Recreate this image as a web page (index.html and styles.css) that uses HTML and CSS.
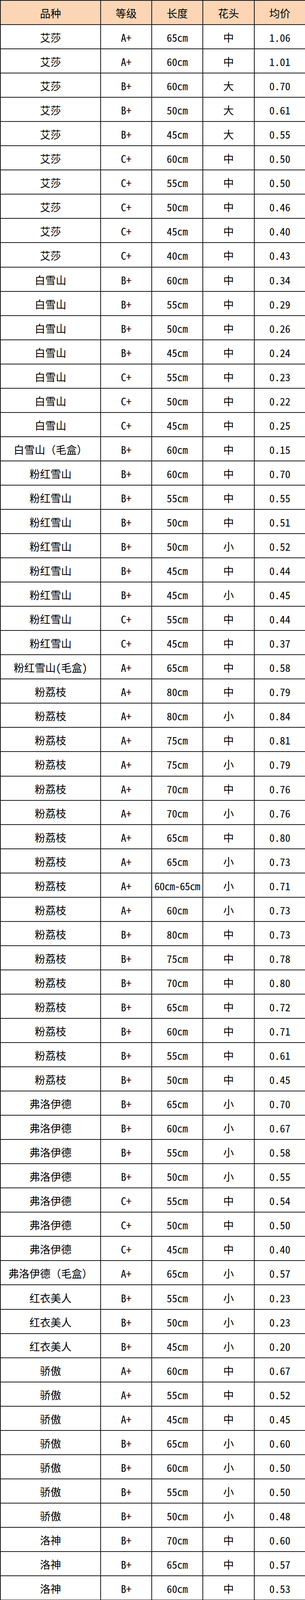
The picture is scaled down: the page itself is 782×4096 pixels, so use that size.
FILE: index.html
```html
<!DOCTYPE html>
<html lang="zh-CN">
<head>
<meta charset="utf-8">
<title>价格表</title>
<link rel="stylesheet" href="styles.css">
</head>
<body>
<table class="price-table">
<colgroup>
<col class="c-name"><col class="c-grade"><col class="c-len"><col class="c-head"><col class="c-price">
</colgroup>
<thead>
<tr><th>品种</th><th>等级</th><th>长度</th><th>花头</th><th>均价</th></tr>
</thead>
<tbody>
<tr><td>艾莎</td><td>A+</td><td>65cm</td><td>中</td><td>1.06</td></tr>
<tr><td>艾莎</td><td>A+</td><td>60cm</td><td>中</td><td>1.01</td></tr>
<tr><td>艾莎</td><td>B+</td><td>60cm</td><td>大</td><td>0.70</td></tr>
<tr><td>艾莎</td><td>B+</td><td>50cm</td><td>大</td><td>0.61</td></tr>
<tr><td>艾莎</td><td>B+</td><td>45cm</td><td>大</td><td>0.55</td></tr>
<tr><td>艾莎</td><td>C+</td><td>60cm</td><td>中</td><td>0.50</td></tr>
<tr><td>艾莎</td><td>C+</td><td>55cm</td><td>中</td><td>0.50</td></tr>
<tr><td>艾莎</td><td>C+</td><td>50cm</td><td>中</td><td>0.46</td></tr>
<tr><td>艾莎</td><td>C+</td><td>45cm</td><td>中</td><td>0.40</td></tr>
<tr><td>艾莎</td><td>C+</td><td>40cm</td><td>中</td><td>0.43</td></tr>
<tr><td>白雪山</td><td>B+</td><td>60cm</td><td>中</td><td>0.34</td></tr>
<tr><td>白雪山</td><td>B+</td><td>55cm</td><td>中</td><td>0.29</td></tr>
<tr><td>白雪山</td><td>B+</td><td>50cm</td><td>中</td><td>0.26</td></tr>
<tr><td>白雪山</td><td>B+</td><td>45cm</td><td>中</td><td>0.24</td></tr>
<tr><td>白雪山</td><td>C+</td><td>55cm</td><td>中</td><td>0.23</td></tr>
<tr><td>白雪山</td><td>C+</td><td>50cm</td><td>中</td><td>0.22</td></tr>
<tr><td>白雪山</td><td>C+</td><td>45cm</td><td>中</td><td>0.25</td></tr>
<tr><td>白雪山（毛盒）</td><td>B+</td><td>60cm</td><td>中</td><td>0.15</td></tr>
<tr><td>粉红雪山</td><td>B+</td><td>60cm</td><td>中</td><td>0.70</td></tr>
<tr><td>粉红雪山</td><td>B+</td><td>55cm</td><td>中</td><td>0.55</td></tr>
<tr><td>粉红雪山</td><td>B+</td><td>50cm</td><td>中</td><td>0.51</td></tr>
<tr><td>粉红雪山</td><td>B+</td><td>50cm</td><td>小</td><td>0.52</td></tr>
<tr><td>粉红雪山</td><td>B+</td><td>45cm</td><td>中</td><td>0.44</td></tr>
<tr><td>粉红雪山</td><td>B+</td><td>45cm</td><td>小</td><td>0.45</td></tr>
<tr><td>粉红雪山</td><td>C+</td><td>55cm</td><td>中</td><td>0.44</td></tr>
<tr><td>粉红雪山</td><td>C+</td><td>45cm</td><td>中</td><td>0.37</td></tr>
<tr><td class="hw">粉红雪山(毛盒)</td><td>A+</td><td>65cm</td><td>中</td><td>0.58</td></tr>
<tr><td>粉荔枝</td><td>A+</td><td>80cm</td><td>中</td><td>0.79</td></tr>
<tr><td>粉荔枝</td><td>A+</td><td>80cm</td><td>小</td><td>0.84</td></tr>
<tr><td>粉荔枝</td><td>A+</td><td>75cm</td><td>中</td><td>0.81</td></tr>
<tr><td>粉荔枝</td><td>A+</td><td>75cm</td><td>小</td><td>0.79</td></tr>
<tr><td>粉荔枝</td><td>A+</td><td>70cm</td><td>中</td><td>0.76</td></tr>
<tr><td>粉荔枝</td><td>A+</td><td>70cm</td><td>小</td><td>0.76</td></tr>
<tr><td>粉荔枝</td><td>A+</td><td>65cm</td><td>中</td><td>0.80</td></tr>
<tr><td>粉荔枝</td><td>A+</td><td>65cm</td><td>小</td><td>0.73</td></tr>
<tr><td>粉荔枝</td><td>A+</td><td class="tight">60cm-65cm</td><td>小</td><td>0.71</td></tr>
<tr><td>粉荔枝</td><td>A+</td><td>60cm</td><td>小</td><td>0.73</td></tr>
<tr><td>粉荔枝</td><td>B+</td><td>80cm</td><td>中</td><td>0.73</td></tr>
<tr><td>粉荔枝</td><td>B+</td><td>75cm</td><td>中</td><td>0.78</td></tr>
<tr><td>粉荔枝</td><td>B+</td><td>70cm</td><td>中</td><td>0.80</td></tr>
<tr><td>粉荔枝</td><td>B+</td><td>65cm</td><td>中</td><td>0.72</td></tr>
<tr><td>粉荔枝</td><td>B+</td><td>60cm</td><td>中</td><td>0.71</td></tr>
<tr><td>粉荔枝</td><td>B+</td><td>55cm</td><td>中</td><td>0.61</td></tr>
<tr><td>粉荔枝</td><td>B+</td><td>50cm</td><td>中</td><td>0.45</td></tr>
<tr><td>弗洛伊德</td><td>B+</td><td>65cm</td><td>小</td><td>0.70</td></tr>
<tr><td>弗洛伊德</td><td>B+</td><td>60cm</td><td>小</td><td>0.67</td></tr>
<tr><td>弗洛伊德</td><td>B+</td><td>55cm</td><td>小</td><td>0.58</td></tr>
<tr><td>弗洛伊德</td><td>B+</td><td>50cm</td><td>小</td><td>0.55</td></tr>
<tr><td>弗洛伊德</td><td>C+</td><td>55cm</td><td>中</td><td>0.54</td></tr>
<tr><td>弗洛伊德</td><td>C+</td><td>50cm</td><td>中</td><td>0.50</td></tr>
<tr><td>弗洛伊德</td><td>C+</td><td>45cm</td><td>中</td><td>0.40</td></tr>
<tr><td>弗洛伊德（毛盒）</td><td>A+</td><td>65cm</td><td>小</td><td>0.57</td></tr>
<tr><td>红衣美人</td><td>B+</td><td>55cm</td><td>小</td><td>0.23</td></tr>
<tr><td>红衣美人</td><td>B+</td><td>50cm</td><td>小</td><td>0.23</td></tr>
<tr><td>红衣美人</td><td>B+</td><td>45cm</td><td>小</td><td>0.20</td></tr>
<tr><td>骄傲</td><td>A+</td><td>60cm</td><td>中</td><td>0.67</td></tr>
<tr><td>骄傲</td><td>A+</td><td>55cm</td><td>中</td><td>0.52</td></tr>
<tr><td>骄傲</td><td>A+</td><td>45cm</td><td>中</td><td>0.45</td></tr>
<tr><td>骄傲</td><td>B+</td><td>65cm</td><td>小</td><td>0.60</td></tr>
<tr><td>骄傲</td><td>B+</td><td>60cm</td><td>小</td><td>0.50</td></tr>
<tr><td>骄傲</td><td>B+</td><td>55cm</td><td>小</td><td>0.50</td></tr>
<tr><td>骄傲</td><td>B+</td><td>50cm</td><td>小</td><td>0.48</td></tr>
<tr><td>洛神</td><td>B+</td><td>70cm</td><td>中</td><td>0.60</td></tr>
<tr><td>洛神</td><td>B+</td><td>65cm</td><td>中</td><td>0.57</td></tr>
<tr><td>洛神</td><td>B+</td><td>60cm</td><td>中</td><td>0.53</td></tr>
</tbody>
</table>
</body>
</html>
```

FILE: styles.css
```css
html, body {
  margin: 0;
  padding: 0;
  background: #ffffff;
}

.price-table {
  width: 782px;
  table-layout: fixed;
  border-collapse: collapse;
  font-family: "Noto Sans CJK SC", "Noto Sans CJK JP", sans-serif;
  font-feature-settings: "hwid" 1;
  font-size: 27px;
  color: #000;
}

.c-name { width: 257px; }
.c-grade { width: 131px; }
.c-len { width: 131px; }
.c-head { width: 132px; }
.c-price { width: 131px; }

.price-table tr {
  height: 62.06px;
}

.price-table th,
.price-table td {
  border: 2px solid #1a1a1a;
  padding: 3px 0 0 0;
  text-align: center;
  vertical-align: middle;
  line-height: 1;
  white-space: nowrap;
  overflow: hidden;
  font-weight: 400;
}

/* variety names keep full-width brackets */
.price-table td:first-child {
  font-feature-settings: normal;
}

.price-table td.hw {
  font-feature-settings: "hwid" 1;
}

.price-table thead th {
  background: #fcd5b4;
}

.price-table td.tight {
  letter-spacing: -0.5px;
}
```
